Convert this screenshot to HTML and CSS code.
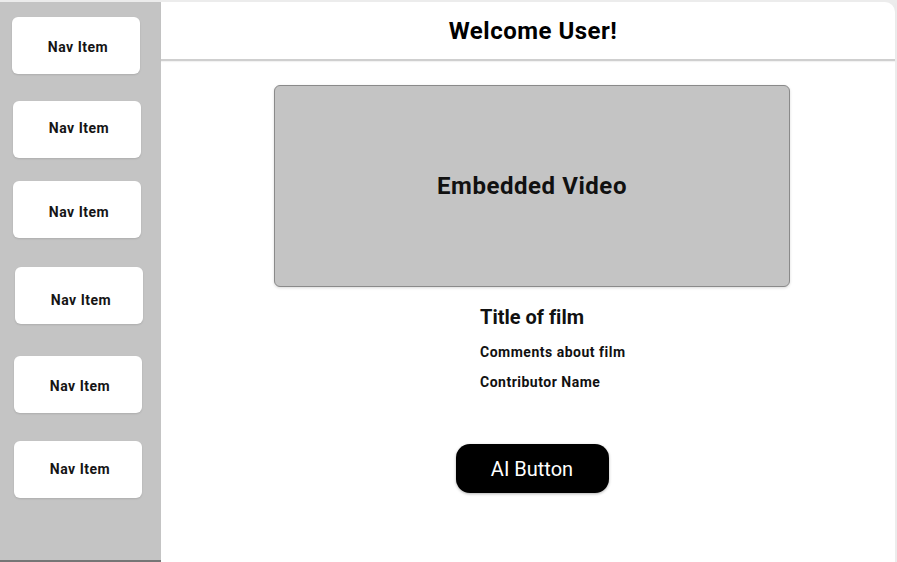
FILE: index.html
```html
<!DOCTYPE html>
<html>
<head>
<meta charset="utf-8">
<link rel="stylesheet" href="styles.css">
</head>
<body>
<div class="app">
  <nav class="sidebar">
    <div class="nav-item n1">Nav Item</div>
    <div class="nav-item n2">Nav Item</div>
    <div class="nav-item n3">Nav Item</div>
    <div class="nav-item n4">Nav Item</div>
    <div class="nav-item n5">Nav Item</div>
    <div class="nav-item n6">Nav Item</div>
  </nav>
  <main class="main">
    <header class="header"><h1>Welcome User!</h1></header>
    <section class="content">
      <div class="video">Embedded Video</div>
      <div class="info">
        <h2 class="film-title">Title of film</h2>
        <p class="meta">Comments about film</p>
        <p class="meta">Contributor Name</p>
      </div>
      <button class="ai-button">AI Button</button>
    </section>
  </main>
</div>
</body>
</html>
```
FILE: styles.css
```css
* { box-sizing: border-box; }
html, body { margin: 0; padding: 0; }
body {
  background: #ececec;
  font-family: Roboto, "Noto Sans", sans-serif;
  color: #111;
  width: 897px;
  height: 562px;
  overflow: hidden;
}
.app {
  display: flex;
  margin-top: 2px;
  height: 560px;
}
.sidebar {
  width: 161px;
  flex: none;
  background: #c4c4c4;
  border-bottom: 2px solid #767676;
  display: flex;
  flex-direction: column;
  padding-top: 15px;
}
.nav-item {
  width: 128px;
  height: 57px;
  background: #fff;
  border-radius: 6px;
  box-shadow: 0 1px 2px rgba(0,0,0,0.12);
  display: flex;
  align-items: center;
  justify-content: center;
  padding-left: 4px;
  font-size: 14px;
  font-weight: 700;
  letter-spacing: 0.5px;
  color: #151515;
}
.n1 { margin-left: 12px; padding-top: 3px; }
.n2 { margin-left: 13px; margin-top: 27px; padding-bottom: 4px; }
.n3 { margin-left: 13px; margin-top: 23px; padding-top: 4px; }
.n4 { margin-left: 15px; margin-top: 29px; padding-top: 8px; }
.n5 { margin-left: 14px; margin-top: 32px; padding-top: 3px; }
.n6 { margin-left: 14px; margin-top: 28px; padding-bottom: 2px; }
.main {
  width: 734px;
  flex: none;
  background: #fff;
  border-top-right-radius: 10px;
  display: flex;
  flex-direction: column;
}
.header {
  height: 59px;
  border-bottom: 2px solid #cfcfcf;
  box-shadow: 0 1px 1px rgba(0,0,0,0.05);
  display: flex;
  align-items: center;
  justify-content: center;
  padding-left: 10px;
  padding-top: 1px;
}
.header h1 {
  margin: 0;
  font-size: 24px;
  font-weight: 700;
  letter-spacing: 0.5px;
  color: #000;
}
.content {
  display: flex;
  flex-direction: column;
  align-items: center;
  padding-left: 8px;
}
.video {
  margin-top: 24px;
  width: 516px;
  height: 202px;
  background: #c4c4c4;
  border: 1px solid #8a8a8a;
  border-radius: 6px;
  box-shadow: 0 1px 3px rgba(0,0,0,0.15);
  display: flex;
  align-items: center;
  justify-content: center;
  font-size: 24px;
  font-weight: 700;
  letter-spacing: 0.55px;
  color: #111;
}
.info {
  align-self: flex-start;
  margin-left: 311px;
  margin-top: 18px;
}
.film-title {
  margin: 0 0 8px 0;
  font-size: 20px;
  font-weight: 700;
  line-height: 24px;
  font-variant-ligatures: none;
  color: #111;
}
.meta {
  margin: 0;
  font-size: 14px;
  font-weight: 700;
  letter-spacing: 0.5px;
  line-height: 30px;
  color: #111;
}
.ai-button {
  margin-top: 47px;
  width: 153px;
  height: 49px;
  background: #000;
  color: #fff;
  border: none;
  border-radius: 14px;
  font-family: Roboto, "Noto Sans", sans-serif;
  font-size: 20px;
  font-weight: 400;
  box-shadow: 0 1px 3px rgba(0,0,0,0.3);
}
```
